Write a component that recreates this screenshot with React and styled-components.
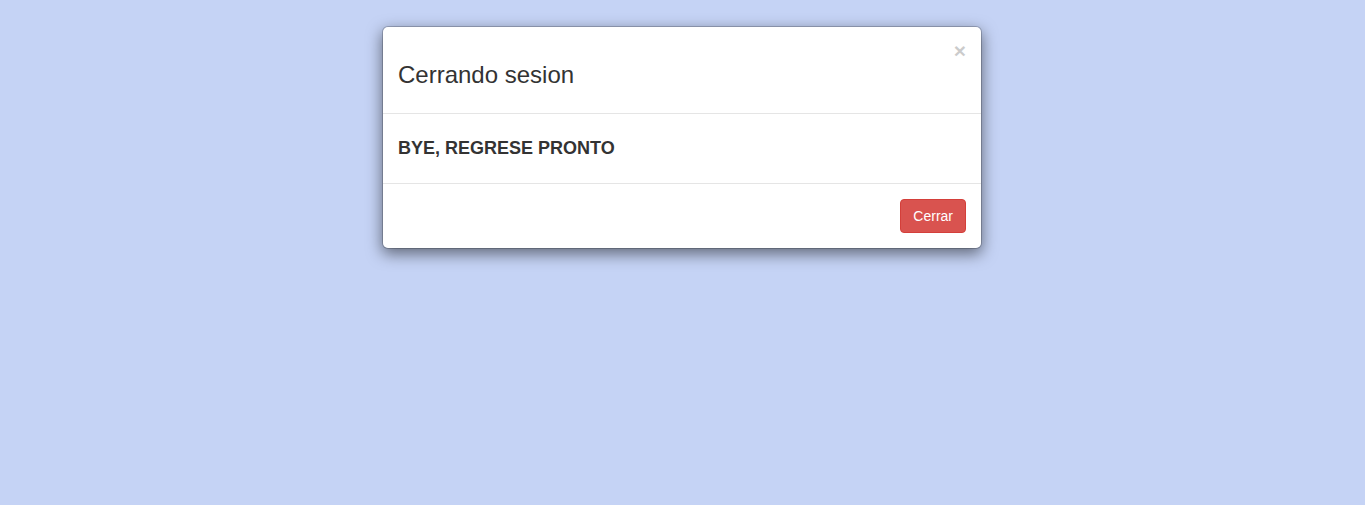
import React from "react";
import styled, { createGlobalStyle } from "styled-components";

const GlobalStyle = createGlobalStyle`
  * { box-sizing: border-box; }
  html, body {
    margin: 0;
    height: 100%;
    background: #c5d3f5;
  }
  body {
    font-family: "Liberation Sans", Arial, sans-serif;
    font-size: 14px;
    line-height: 1.42857143;
    color: #333;
  }
`;

const Page = styled.div`
  min-height: 100vh;
  padding: 26px 1px 0 0;
`;

const Dialog = styled.div`
  width: 600px;
  margin: 0 auto;
  background: #fff;
  border: 1px solid rgba(0, 0, 0, 0.2);
  border-radius: 6px;
  box-shadow: 0 5px 15px rgba(0, 0, 0, 0.5);
  background-clip: padding-box;
`;

const Header = styled.div`
  padding: 15px;
  border-bottom: 1px solid #e5e5e5;
  &::after {
    content: "";
    display: table;
    clear: both;
  }
`;

const CloseButton = styled.button`
  float: right;
  margin-top: -2px;
  padding: 0;
  border: 0;
  background: transparent;
  cursor: pointer;
  font-family: inherit;
  font-size: 21px;
  font-weight: 700;
  line-height: 1;
  color: #000;
  text-shadow: 0 1px 0 #fff;
  opacity: 0.2;
`;

const Title = styled.h3`
  margin: 20px 0 10px;
  font-size: 24px;
  font-weight: 500;
  line-height: 1.1;
`;

const Body = styled.div`
  padding: 15px;
`;

const Message = styled.h4`
  margin: 10px 0;
  font-size: 18px;
  font-weight: 700;
  line-height: 19px;
`;

const Footer = styled.div`
  padding: 15px;
  border-top: 1px solid #e5e5e5;
  text-align: right;
`;

const Button = styled.button`
  display: inline-block;
  padding: 6px 12px;
  font-family: inherit;
  font-size: 14px;
  line-height: 1.42857143;
  border: 1px solid ${(p) => (p.danger ? "#d43f3a" : "#ccc")};
  border-radius: 4px;
  color: ${(p) => (p.danger ? "#fff" : "#333")};
  background: ${(p) => (p.danger ? "#d9534f" : "#fff")};
  cursor: pointer;
`;

export default function App() {
  return (
    <>
      <GlobalStyle />
      <Page>
        <Dialog>
          <Header>
            <CloseButton aria-label="Close">×</CloseButton>
            <Title>Cerrando sesion</Title>
          </Header>
          <Body>
            <Message>BYE, REGRESE PRONTO</Message>
          </Body>
          <Footer>
            <Button danger>Cerrar</Button>
          </Footer>
        </Dialog>
      </Page>
    </>
  );
}
